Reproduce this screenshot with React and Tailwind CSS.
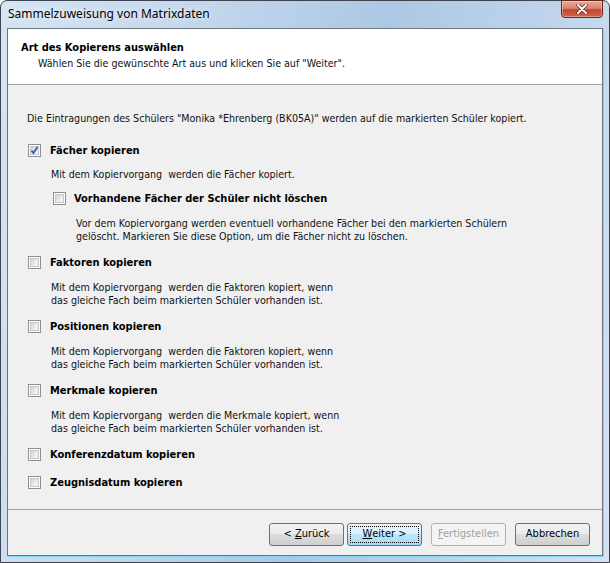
import { useState } from "react";

// Vista style checkbox: gray frame, white gap, soft inner gradient
const CheckBox = ({ checked, onChange }) => (
  <span
    onClick={onChange}
    className="relative flex h-[13px] w-[13px] shrink-0 border border-[#8e8f8f] bg-white p-px"
  >
    <span className="flex-1 border border-[#c4c6c9] bg-[linear-gradient(135deg,#d2d4d8_0%,#e9eaec_55%,#f7f7f7_100%)]" />
    {checked && (
      <svg viewBox="0 0 13 13" className="absolute left-[-1px] top-[-1px] h-[13px] w-[13px]">
        <path d="M3.5 6.5 L5.5 9 L9.5 3" fill="none" stroke="#3b56a6" strokeWidth="1.8" />
      </svg>
    )}
  </span>
);

const Option = ({ label, checked, onChange, className }) => (
  <div className={"flex h-[13px] items-center " + className}>
    <CheckBox checked={checked} onChange={onChange} />
    <span className="ml-[9px] font-bold leading-[13px] text-black">{label}</span>
  </div>
);

const Desc = ({ children, className }) => (
  <p className={"text-[10.6px] leading-[13px] text-[#111] " + className}>{children}</p>
);

const WizButton = ({ children, primary, disabled }) => {
  if (disabled) {
    return (
      <button className="h-[23px] w-[75px] rounded-[3px] border border-[#adb2b5] bg-[#f4f4f4] text-[#a0a0a0]">
        {children}
      </button>
    );
  }
  if (primary) {
    return (
      <button className="h-[23px] w-[75px] rounded-[3px] border border-[#3c7fb1] bg-[linear-gradient(#eaf6fd_0%,#d9f0fc_50%,#bee6fd_50%,#a7d9f5_100%)] p-[2px] text-black">
        <span className="flex h-full w-full items-center justify-center border border-dotted border-black">
          {children}
        </span>
      </button>
    );
  }
  return (
    <button className="h-[23px] w-[75px] rounded-[3px] border border-[#707070] bg-[linear-gradient(#f2f2f2_0%,#ebebeb_50%,#dddddd_50%,#cfcfcf_100%)] text-black">
      {children}
    </button>
  );
};

export default function App() {
  const [opts, setOpts] = useState({
    faecher: true,
    behalten: false,
    faktoren: false,
    positionen: false,
    merkmale: false,
    konferenz: false,
    zeugnis: false,
  });
  const toggle = (k) => setOpts((p) => ({ ...p, [k]: !p[k] }));

  return (
    <div className="h-[563px] w-[610px] bg-white">
      <div className="flex h-[563px] w-[610px] flex-col rounded-t-[7px] border border-[#3b4450] bg-[linear-gradient(100deg,#d6e4f3_0%,#c2d6ec_30%,#adc8e4_55%,#bcd2ea_75%,#d3e2f2_100%)] px-[6px] pb-[6px] font-['DejaVu_Sans_Condensed','Liberation_Sans',sans-serif] text-[11px]">
        {/* title bar */}
        <div className="flex h-[27px] items-start justify-between">
          <span className="mt-[5px] pl-px font-['Noto_Sans',sans-serif] text-[12px] leading-[16px] text-black [text-shadow:0_0_6px_#ffffff]">
            Sammelzuweisung von Matrixdaten
          </span>
          <div className="mt-[-1px] flex h-[18px] w-[42px] items-center justify-center rounded-b-[4px] border border-[#6b2418] bg-[linear-gradient(#e9a99b_0%,#d88470_45%,#c4452c_55%,#d0664a_100%)] shadow-[inset_0_0_0_1px_rgba(255,255,255,0.35)]">
            <svg viewBox="0 0 12 10" className="h-[10px] w-[12px]">
              <path d="M2 1 L10 9 M10 1 L2 9" stroke="#5a2a22" strokeWidth="3.4" strokeLinecap="round" />
              <path d="M2 1 L10 9 M10 1 L2 9" stroke="#ffffff" strokeWidth="2" strokeLinecap="round" />
            </svg>
          </div>
        </div>

        {/* client area */}
        <div className="flex flex-1 flex-col border border-[#6b7580] bg-[#f0f0f0] shadow-[1px_1px_0_#7fd4f2]">
          <div className="h-[56px] border-b border-[#a0a0a0] bg-white pl-[13px] pt-[12px]">
            <p className="font-bold leading-[13px] text-black">Art des Kopierens auswählen</p>
            <p className="mt-[3px] pl-[17px] text-[10.6px] leading-[13px] text-[#111]">
              Wählen Sie die gewünschte Art aus und klicken Sie auf "Weiter".
            </p>
          </div>

          <div className="flex-1 pl-[19px] pt-[27px]">
            <p className="text-[10.6px] leading-[13px] text-[#111]">
              Die Eintragungen des Schülers "Monika *Ehrenberg (BK05A)" werden auf die markierten Schüler kopiert.
            </p>

            <Option className="ml-px mt-[19px]" label="Fächer kopieren" checked={opts.faecher} onChange={() => toggle("faecher")} />
            <Desc className="ml-[24px] mt-[11px]">Mit dem Kopiervorgang&nbsp; werden die Fächer kopiert.</Desc>

            <Option
              className="ml-[26px] mt-[11px] [&>span:last-child]:ml-[8px]"
              label="Vorhandene Fächer der Schüler nicht löschen"
              checked={opts.behalten}
              onChange={() => toggle("behalten")}
            />
            <Desc className="ml-[49px] mt-[12px]">
              Vor dem Kopiervorgang werden eventuell vorhandene Fächer bei den markierten Schülern
              <br />
              gelöscht. Markieren Sie diese Option, um die Fächer nicht zu löschen.
            </Desc>

            <Option className="ml-px mt-[13px]" label="Faktoren kopieren" checked={opts.faktoren} onChange={() => toggle("faktoren")} />
            <Desc className="ml-[24px] mt-[12px]">
              Mit dem Kopiervorgang&nbsp; werden die Faktoren kopiert, wenn
              <br />
              das gleiche Fach beim markierten Schüler vorhanden ist.
            </Desc>

            <Option className="ml-px mt-[13px]" label="Positionen kopieren" checked={opts.positionen} onChange={() => toggle("positionen")} />
            <Desc className="ml-[24px] mt-[12px]">
              Mit dem Kopiervorgang&nbsp; werden die Faktoren kopiert, wenn
              <br />
              das gleiche Fach beim markierten Schüler vorhanden ist.
            </Desc>

            <Option className="ml-px mt-[13px]" label="Merkmale kopieren" checked={opts.merkmale} onChange={() => toggle("merkmale")} />
            <Desc className="ml-[24px] mt-[12px]">
              Mit dem Kopiervorgang&nbsp; werden die Merkmale kopiert, wenn
              <br />
              das gleiche Fach beim markierten Schüler vorhanden ist.
            </Desc>

            <Option className="ml-px mt-[13px]" label="Konferenzdatum kopieren" checked={opts.konferenz} onChange={() => toggle("konferenz")} />
            <Option className="ml-px mt-[15px]" label="Zeugnisdatum kopieren" checked={opts.zeugnis} onChange={() => toggle("zeugnis")} />
          </div>

          {/* button row */}
          <div className="flex h-[46px] justify-end border-t border-[#a0a0a0] pr-[12px] pt-[13px]">
            <WizButton>
              &lt; <u>Z</u>urück
            </WizButton>
            <div className="ml-[3px]">
              <WizButton primary>
                <u>W</u>eiter &gt;
              </WizButton>
            </div>
            <div className="ml-[9px]">
              <WizButton disabled>
                <u>F</u>ertigstellen
              </WizButton>
            </div>
            <div className="ml-[9px]">
              <WizButton>Abbrechen</WizButton>
            </div>
          </div>
        </div>
      </div>
    </div>
  );
}
